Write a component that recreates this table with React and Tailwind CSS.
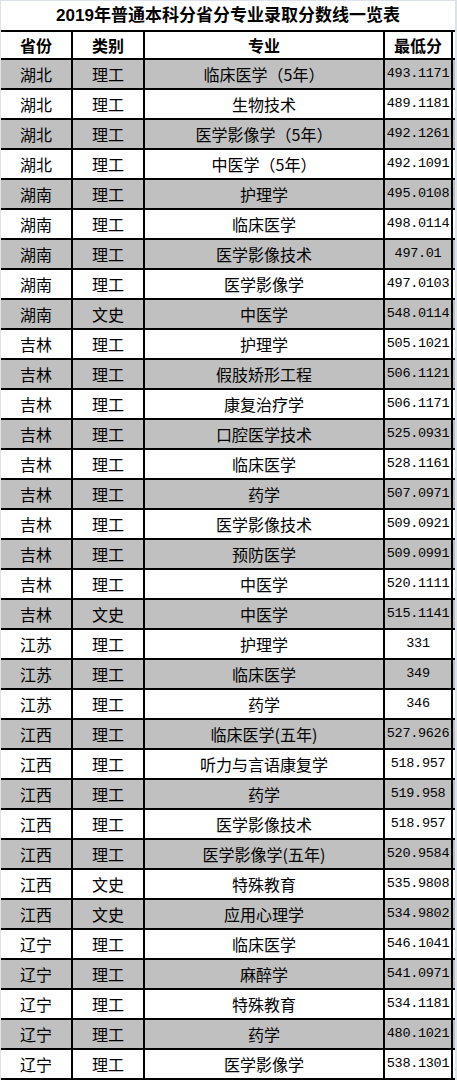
const rows = [
  ["湖北", "理工", "临床医学（5年）", "493.1171"],
  ["湖北", "理工", "生物技术", "489.1181"],
  ["湖北", "理工", "医学影像学（5年）", "492.1261"],
  ["湖北", "理工", "中医学（5年）", "492.1091"],
  ["湖南", "理工", "护理学", "495.0108"],
  ["湖南", "理工", "临床医学", "498.0114"],
  ["湖南", "理工", "医学影像技术", "497.01"],
  ["湖南", "理工", "医学影像学", "497.0103"],
  ["湖南", "文史", "中医学", "548.0114"],
  ["吉林", "理工", "护理学", "505.1021"],
  ["吉林", "理工", "假肢矫形工程", "506.1121"],
  ["吉林", "理工", "康复治疗学", "506.1171"],
  ["吉林", "理工", "口腔医学技术", "525.0931"],
  ["吉林", "理工", "临床医学", "528.1161"],
  ["吉林", "理工", "药学", "507.0971"],
  ["吉林", "理工", "医学影像技术", "509.0921"],
  ["吉林", "理工", "预防医学", "509.0991"],
  ["吉林", "理工", "中医学", "520.1111"],
  ["吉林", "文史", "中医学", "515.1141"],
  ["江苏", "理工", "护理学", "331"],
  ["江苏", "理工", "临床医学", "349"],
  ["江苏", "理工", "药学", "346"],
  ["江西", "理工", "临床医学(五年)", "527.9626"],
  ["江西", "理工", "听力与言语康复学", "518.957"],
  ["江西", "理工", "药学", "519.958"],
  ["江西", "理工", "医学影像技术", "518.957"],
  ["江西", "理工", "医学影像学(五年)", "520.9584"],
  ["江西", "文史", "特殊教育", "535.9808"],
  ["江西", "文史", "应用心理学", "534.9802"],
  ["辽宁", "理工", "临床医学", "546.1041"],
  ["辽宁", "理工", "麻醉学", "541.0971"],
  ["辽宁", "理工", "特殊教育", "534.1181"],
  ["辽宁", "理工", "药学", "480.1021"],
  ["辽宁", "理工", "医学影像学", "538.1301"],
];

const cjk = "font-['Noto_Sans_CJK_SC',sans-serif]";

const Row = ({ cells, gray, header }) => {
  const bg = gray ? "bg-[#c0c0c0]" : "bg-white";
  const txt = header ? "font-bold text-[16px]" : "text-[16px]";
  return (
    <div className={`flex h-[30px] border-b-2 border-black ${header ? "border-t-2" : ""} ${bg} ${txt} ${cjk} text-black leading-none`}>
      <div className="w-[70px] flex items-center justify-center">{cells[0]}</div>
      <div className="w-[72px] border-l-2 border-black flex items-center justify-center">{cells[1]}</div>
      <div className="w-[240px] border-l-2 border-black flex items-center justify-center">{cells[2]}</div>
      <div
        className={`w-[70px] border-l-2 border-r-2 border-black flex items-center justify-center ${
          header ? "" : "font-['Liberation_Mono','Noto_Sans_CJK_SC',monospace] text-[13.5px] tracking-[-0.3px]"
        }`}
      >
        {cells[3]}
      </div>
    </div>
  );
};

export default function App() {
  return (
    <div className="w-[457px] bg-[#dde3ea] pl-[1px] pr-[2px]">
      <div className="w-[454px]">
        <div className="h-[30px] bg-white flex items-center justify-center border-t border-[#dde3ea]">
          <span className="font-bold text-[17px] leading-none text-black font-['Liberation_Sans','Noto_Sans_CJK_SC',sans-serif]">
            2019年普通本科分省分专业录取分数线一览表
          </span>
        </div>
        <Row header cells={["省份", "类别", "专业", "最低分"]} />
        {rows.map((r, i) => (
          <Row key={i} cells={r} gray={i % 2 === 0} />
        ))}
      </div>
    </div>
  );
}
